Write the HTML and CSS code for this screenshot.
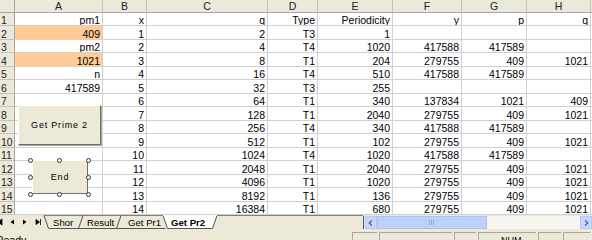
FILE: index.html
```html
<!DOCTYPE html>
<html>
<head>
<meta charset="utf-8">
<link rel="stylesheet" href="styles.css">
</head>
<body>
<div class="app">
  <div class="sheet">
    <div class="corner"></div><div class="h">A</div><div class="h">B</div><div class="h">C</div><div class="h">D</div><div class="h">E</div><div class="h">F</div><div class="h">G</div><div class="h">H</div><div class="h"></div>

    <div class="r">1</div><div class="c">pm1</div><div class="c">x</div><div class="c">q</div><div class="c">Type</div><div class="c">Periodicity</div><div class="c">y</div><div class="c">p</div><div class="c">q</div><div class="c"></div>
    <div class="r">2</div><div class="c fill">409</div><div class="c">1</div><div class="c">2</div><div class="c">T3</div><div class="c">1</div><div class="c"></div><div class="c"></div><div class="c"></div><div class="c"></div>
    <div class="r">3</div><div class="c">pm2</div><div class="c">2</div><div class="c">4</div><div class="c">T4</div><div class="c">1020</div><div class="c">417588</div><div class="c">417589</div><div class="c"></div><div class="c"></div>
    <div class="r">4</div><div class="c fill">1021</div><div class="c">3</div><div class="c">8</div><div class="c">T1</div><div class="c">204</div><div class="c">279755</div><div class="c">409</div><div class="c">1021</div><div class="c"></div>
    <div class="r">5</div><div class="c">n</div><div class="c">4</div><div class="c">16</div><div class="c">T4</div><div class="c">510</div><div class="c">417588</div><div class="c">417589</div><div class="c"></div><div class="c"></div>
    <div class="r">6</div><div class="c">417589</div><div class="c">5</div><div class="c">32</div><div class="c">T3</div><div class="c">255</div><div class="c"></div><div class="c"></div><div class="c"></div><div class="c"></div>
    <div class="r">7</div><div class="c"></div><div class="c">6</div><div class="c">64</div><div class="c">T1</div><div class="c">340</div><div class="c">137834</div><div class="c">1021</div><div class="c">409</div><div class="c"></div>
    <div class="r">8</div><div class="c"></div><div class="c">7</div><div class="c">128</div><div class="c">T1</div><div class="c">2040</div><div class="c">279755</div><div class="c">409</div><div class="c">1021</div><div class="c"></div>
    <div class="r">9</div><div class="c"></div><div class="c">8</div><div class="c">256</div><div class="c">T4</div><div class="c">340</div><div class="c">417588</div><div class="c">417589</div><div class="c"></div><div class="c"></div>
    <div class="r">10</div><div class="c"></div><div class="c">9</div><div class="c">512</div><div class="c">T1</div><div class="c">102</div><div class="c">279755</div><div class="c">409</div><div class="c">1021</div><div class="c"></div>
    <div class="r">11</div><div class="c"></div><div class="c">10</div><div class="c">1024</div><div class="c">T4</div><div class="c">1020</div><div class="c">417588</div><div class="c">417589</div><div class="c"></div><div class="c"></div>
    <div class="r">12</div><div class="c"></div><div class="c">11</div><div class="c">2048</div><div class="c">T1</div><div class="c">2040</div><div class="c">279755</div><div class="c">409</div><div class="c">1021</div><div class="c"></div>
    <div class="r">13</div><div class="c"></div><div class="c">12</div><div class="c">4096</div><div class="c">T1</div><div class="c">1020</div><div class="c">279755</div><div class="c">409</div><div class="c">1021</div><div class="c"></div>
    <div class="r">14</div><div class="c"></div><div class="c">13</div><div class="c">8192</div><div class="c">T1</div><div class="c">136</div><div class="c">279755</div><div class="c">409</div><div class="c">1021</div><div class="c"></div>
    <div class="r">15</div><div class="c"></div><div class="c">14</div><div class="c">16384</div><div class="c">T1</div><div class="c">680</div><div class="c">279755</div><div class="c">409</div><div class="c">1021</div><div class="c"></div>

    <div class="btn btn-prime">Get Prime 2</div>
    <div class="btn btn-end">End</div>
    <div class="handles">
      <span class="hd" style="left:-2px;top:-2px"></span>
      <span class="hd" style="left:27px;top:-2px"></span>
      <span class="hd" style="left:56px;top:-2px"></span>
      <span class="hd" style="left:-2px;top:15px"></span>
      <span class="hd" style="left:56px;top:15px"></span>
      <span class="hd" style="left:-2px;top:32px"></span>
      <span class="hd" style="left:27px;top:32px"></span>
      <span class="hd" style="left:56px;top:32px"></span>
    </div>
  </div>

  <div class="tabbar">
    <svg class="tabs" width="363" height="15" viewBox="0 0 363 15">
      <path d="M-4 4v6M2 4l-4 3 4 3z" fill="#000" stroke="#000" stroke-width="0.8"/>
      <path d="M14 4.5l-3.5 2.5 3.5 2.5z" fill="#000"/>
      <path d="M23 4.5l3.5 2.5-3.5 2.5z" fill="#000"/>
      <path d="M36 4.5l3.5 2.5-3.5 2.5z M40.5 4v6" fill="#000" stroke="#000" stroke-width="0.8"/>
      <line x1="44" y1="0.5" x2="363" y2="0.5" stroke="#808080"/>
      <polygon points="163,0 167.5,13.5 212.5,13.5 217,0" fill="#fff"/>
      <path d="M44 0.5l4.5 13h117 M83 0.5l-4.5 13 M121 0.5l-4.5 13 M163 0.5l4.5 13h45l4.5-13" fill="none" stroke="#555" stroke-width="1"/>
      <line x1="163" y1="0.5" x2="217" y2="0.5" stroke="#fff"/>
      <text x="53" y="11" class="tt">Shor</text>
      <text x="87" y="11" class="tt">Result</text>
      <text x="128" y="11" class="tt">Get Pr1</text>
      <text x="171" y="11" class="tt tb">Get Pr2</text>
    </svg>
    <div class="hscroll">
      <div class="sbtn"><svg width="12" height="12" viewBox="0 0 12 12"><path d="M7 3l-3 3 3 3" fill="none" stroke="#4d6185" stroke-width="1.6"/></svg></div>
      <div class="thumb"><span class="grip"></span></div>
      <div class="track"></div>
      <div class="sbtn"><svg width="12" height="12" viewBox="0 0 12 12"><path d="M5 3l3 3-3 3" fill="none" stroke="#4d6185" stroke-width="1.6"/></svg></div>
    </div>
  </div>

  <div class="status">
    <div class="ready">Ready</div>
    <div class="panel p1"></div>
    <div class="panel p2"></div>
    <div class="panel p3"></div>
    <div class="panel p4">NUM</div>
    <div class="panel p5"></div>
    <div class="panel p6"></div>
    <div class="panel p7"></div>
  </div>
</div>
</body>
</html>
```

FILE: styles.css
```css
* { box-sizing: border-box; }
body {
  margin: 0;
  width: 592px;
  height: 240px;
  overflow: hidden;
  background: #fff;
  font-family: "Liberation Sans", Arial, sans-serif;
}
.app {
  width: 592px;
  height: 240px;
  overflow: hidden;
  display: flex;
  flex-direction: column;
}
.sheet {
  position: relative;
  display: grid;
  grid-template-columns: 15px 88px 44px 121px 50px 75px 69px 65px 64px 30px;
  grid-template-rows: 13px repeat(15, 13.47px);
  width: 621px;
  height: 215px;
  flex: none;
}
.corner, .h, .r, .c {
  font-size: 10.5px;
  line-height: 10px;
  white-space: nowrap;
  overflow: hidden;
}
.corner {
  background: #ebe9db;
  border-right: 1px solid #aca899;
  border-bottom: 1px solid #aca899;
}
.h {
  background: #ebe9db;
  border-right: 1px solid #c5c2b0;
  border-bottom: 1px solid #aca899;
  text-align: center;
  color: #222;
  padding-top: 1px;
}
.r {
  background: #ebe9db;
  border-right: 1px solid #aca899;
  border-bottom: 1px solid #c5c2b0;
  padding-left: 1px;
  color: #222;
  display: flex;
  align-items: flex-end;
}
.c {
  border-right: 1px solid #d0d0d0;
  border-bottom: 1px solid #d0d0d0;
  padding: 0 2px 0 0;
  display: flex;
  align-items: flex-end;
  justify-content: flex-end;
  color: #000;
}
.c.fill { background: #ffcc99; border-color: #ffcc99 #d0d0d0 #ffcc99 #ffcc99; }

.btn {
  position: absolute;
  background: #ece9d8;
  font-size: 9px;
  letter-spacing: 0.8px;
  color: #000;
  display: flex;
  align-items: center;
  justify-content: center;
}
.btn-prime {
  left: 18px;
  top: 105px;
  width: 83px;
  height: 40px;
  border: 1px solid;
  border-color: #fffffb #716f64 #716f64 #fffffb;
  box-shadow: 1px 1px 0 #aca899;
}
.btn-end {
  left: 32px;
  top: 160px;
  width: 56px;
  height: 34px;
  border: 1px solid;
  border-color: #fffffb #716f64 #716f64 #fffffb;
}
.handles {
  position: absolute;
  left: 30px;
  top: 160px;
  width: 59px;
  height: 35px;
}
.hd {
  position: absolute;
  width: 5px;
  height: 5px;
  border-radius: 50%;
  border: 1px solid #333;
  background: #fff;
}

.tabbar {
  display: flex;
  height: 15px;
  background: #ece9d8;
  flex: none;
}
.tabs { flex: none; display: block; }
.tt {
  font-family: "Liberation Sans", Arial, sans-serif;
  font-size: 9.6px;
  fill: #000;
}
.tb { font-weight: bold; }
.hscroll {
  flex: 1;
  display: flex;
  height: 13px;
  margin-top: 1px;
  border-left: 1px solid #555;
  padding-left: 1px;
}
.sbtn {
  width: 12px;
  height: 13px;
  background: #c6d6fc;
  border: 1px solid #b4c8f6;
  display: flex;
  align-items: center;
  justify-content: center;
  flex: none;
}
.thumb {
  width: 110px;
  height: 13px;
  background: #bdd2fa;
  border: 1px solid #a9c2f2;
  display: flex;
  align-items: center;
  justify-content: center;
  flex: none;
}
.grip {
  width: 6px;
  height: 5px;
  background: repeating-linear-gradient(90deg, #8ea9e0 0 1px, transparent 1px 2px);
}
.track {
  flex: 1;
  background: #f6f5ef;
}

.status {
  display: flex;
  height: 10px;
  background: #ece9d8;
  flex: none;
}
.ready {
  font-size: 10.5px;
  line-height: 12px;
  padding-top: 4px;
  margin-left: -4px;
  width: 354px;
  flex: none;
}
.panel {
  flex: none;
  height: 10px;
  margin-top: 2px;
  border-left: 1px solid #aca899;
  border-top: 1px solid #aca899;
  margin-left: 2px;
  font-size: 9px;
  line-height: 10px;
  text-align: center;
  color: #000;
}
.p1 { width: 25px; }
.p2 { width: 73px; }
.p3 { width: 22px; }
.p4 { width: 58px; padding-top: 2px; text-align: left; padding-left: 22px; }
.p5 { width: 23px; }
.p6 { width: 27px; }
.p7 { width: 20px; }
```
